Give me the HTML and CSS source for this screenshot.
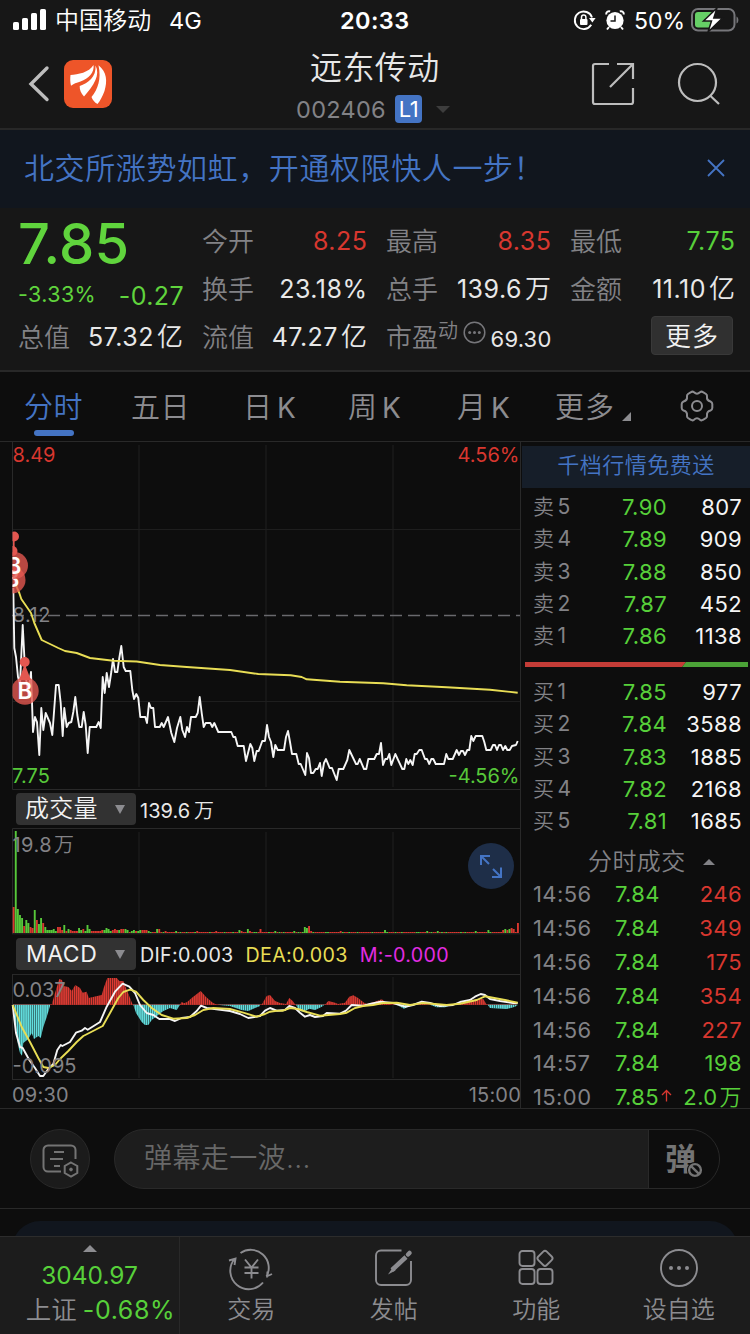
FILE: index.html
```html
<!DOCTYPE html>
<html lang="zh-CN">
<head>
<meta charset="utf-8">
<title>远东传动 002406</title>
<link rel="stylesheet" href="styles.css">
</head>
<body>
<header class="header">
  <div class="status">
    <svg class="signal" width="34" height="22" viewBox="0 0 34 22" fill="#fff"><rect x="0" y="13" width="6" height="8" rx="1.6"/><rect x="9" y="9" width="6" height="12" rx="1.6"/><rect x="18" y="4" width="6" height="17" rx="1.6"/><rect x="27" y="0" width="6" height="21" rx="1.6"/></svg>
    <span class="carrier">中国移动</span>
    <span class="network">4G</span>
    <span class="clock">20:33</span>
    <svg class="lock" width="22" height="20" viewBox="0 0 22 20" fill="none" stroke="#fff" stroke-width="1.9"><path d="M17.2 14.8A8.8 8.8 0 1 1 18 7.5"/><path d="M15 8h6.6L18.4 12.500z" fill="#fff" stroke="none"/><rect x="6" y="9" width="7.500" height="6" rx="1" fill="#fff" stroke="none"/><path d="M7.500 9V7.200a2.200 2.200 0 0 1 4.400 0V9" stroke-width="1.500"/></svg>
    <svg class="alarm" width="20" height="20" viewBox="0 0 20 20"><circle cx="10" cy="10.500" r="8.600" fill="#fff"/><path d="M1.200 4.500C1 2 3 .8 5.200 1.400M18.800 4.500C19 2 17 .8 14.800 1.400" fill="none" stroke="#fff" stroke-width="2"/><path d="M4 17l-2 2.500M16 17l2 2.500" stroke="#fff" stroke-width="2"/><path d="M10 5.500V11H5.500" fill="none" stroke="#171717" stroke-width="1.500"/></svg>
    <span class="percent">50%</span>
    <svg class="battery" width="48" height="24" viewBox="0 0 48 24"><rect x="1" y="1" width="42.500" height="21.500" rx="6" fill="none" stroke="#76767a" stroke-width="2"/><path d="M45.500 8.500c2.500 1 2.500 6 0 7z" fill="#76767a"/><rect x="4" y="4" width="18" height="15.500" rx="3" fill="#66cf66"/><path d="M26 0L12.500 13h8L17 24 31.500 10h-8.700z" fill="#fff" stroke="#171717" stroke-width="1.500"/></svg>
  </div>
  <div class="nav">
    <svg class="back" width="22" height="38" viewBox="0 0 22 38" fill="none" stroke="#bdbdbd" stroke-width="3.400" stroke-linecap="round"><path d="M19 3L3 19l16 15.500" /></svg>
    <svg class="logo" width="48" height="48" viewBox="0 0 48 48"><rect width="48" height="48" rx="9" fill="#ee5529"/><g fill="#fff"><path d="M6.500 15C14 14.500 25 12.500 29.500 5c1.200 7-5 14-13 16.500-4 1.200-7 2.300-9.500 4.300-.8-3.600-1-7-.5-10.800z"/><path d="M31.500 5.500C36.500 15 30 25 20 36.500c-3-3-4.500-7-4.300-10.500C24 23 32.500 17 31.500 5.500z"/><path d="M34.500 5.200C43 12 43.500 21 40.500 31c-2 5-4 9.500-7 13-3-1.500-4.800-4-6-7C34 29 37.500 19 34.500 5.200z"/></g></svg>
    <div class="heading">
      <div class="name">远东传动</div>
      <div class="code">002406<span class="level">L1</span><i class="caret"></i></div>
    </div>
    <svg class="share" width="44" height="44" viewBox="0 0 44 44" fill="none" stroke="#bdbdbd" stroke-width="2.200"><path d="M18 2H4a2 2 0 0 0-2 2v36a2 2 0 0 0 2 2h36a2 2 0 0 0 2-2V26M26 2h16v15M42 2L19 25"/></svg>
    <svg class="search" width="44" height="44" viewBox="0 0 44 44" fill="none" stroke="#bdbdbd" stroke-width="2.200"><circle cx="20.500" cy="20.500" r="18.500"/><path d="M33 33.500l9 8.500"/></svg>
  </div>
</header>

<section class="notice">
  <span>北交所涨势如虹，开通权限快人一步！</span>
  <svg width="18" height="18" viewBox="0 0 18 18" stroke="#4474c4" stroke-width="1.800"><path d="M1 1l16 16M17 1L1 17"/></svg>
</section>

<section class="quote">
  <div class="price-box">
    <div class="price">7.85</div>
    <div class="change"><span>-3.33%</span><b>-0.27</b></div>
  </div>
  <div class="stat"><label>今开</label><span class="up">8.25</span></div>
  <div class="stat"><label>最高</label><span class="up">8.35</span></div>
  <div class="stat"><label>最低</label><span class="down">7.75</span></div>
  <div class="stat"><label>换手</label><span>23.18%</span></div>
  <div class="stat"><label>总手</label><span>139.6<i>万</i></span></div>
  <div class="stat"><label>金额</label><span>11.10<i>亿</i></span></div>
  <div class="stat"><label>总值</label><span>57.32<i>亿</i></span></div>
  <div class="stat"><label>流值</label><span>47.27<i>亿</i></span></div>
  <div class="stat pe"><label>市盈<sup>动</sup></label><svg width="23" height="23" viewBox="0 0 23 23"><circle cx="11.500" cy="11.500" r="10.300" fill="none" stroke="#76767a" stroke-width="1.500"/><g fill="#76767a"><circle cx="6.700" cy="11.500" r="1.500"/><circle cx="11.500" cy="11.500" r="1.500"/><circle cx="16.300" cy="11.500" r="1.500"/></g></svg><span>69.30</span></div>
  <div class="stat more"><button>更多</button></div>
</section>

<nav class="tabs">
  <span class="tab active">分时</span>
  <span class="tab t2">五日</span>
  <span class="tab t3">日<em>K</em></span>
  <span class="tab t4">周<em>K</em></span>
  <span class="tab t5">月<em>K</em></span>
  <span class="tab t6">更多<i></i></span>
  <svg class="gear" width="34" height="32" viewBox="0 0 34 32" fill="none" stroke="#8c8c90" stroke-width="2"><circle cx="17" cy="16" r="5"/><path d="M11 2.200Q12.500 1 14 2.300Q17 5.200 20 2.300Q21.500 1 23 2.200L26 4Q27.300 5 27 6.500Q26.500 10.500 30.500 11.500Q32.300 12.300 32.300 14V18Q32.300 19.700 30.500 20.500Q26.500 21.500 27 25.500Q27.300 27 26 28L23 29.800Q21.500 31 20 29.700Q17 26.800 14 29.700Q12.500 31 11 29.800L8 28Q6.700 27 7 25.500Q7.500 21.500 3.500 20.500Q1.700 19.700 1.700 18V14Q1.700 12.300 3.500 11.500Q7.500 10.500 7 6.500Q6.700 5 8 4Z"/></svg>
</nav>

<main class="market">
  <div class="charts">
    <svg class="panel" width="521" height="349" viewBox="0 441 521 349">
      <defs><clipPath id="plot"><rect x="12.500" y="441" width="508" height="349"/></clipPath></defs>
      <path class="grid" d="M139 445V787M266 445V787M393 445V787"/>
      <path class="grid thin" d="M13 529.500H520M13 701.500H520"/>
      <path class="frame" d="M12.500 441V789.500H520.500V441"/>
      <path d="M12 615.500H520" stroke="#69696d" stroke-width="1.300" stroke-dasharray="12 6"/>
      <text class="t gray" x="12.500" y="622" textLength="38">8.12</text>
      <g clip-path="url(#plot)">
        <polyline class="line white" points="13.300,588 14.300,648 16,657 18,677 20,684 22.700,625 25,670 28,694 31,672 33,732 35,717 37,722 39.300,755 41.300,708 43.300,730 45.700,713 50,723 52.300,735 56,685 58.700,685 60.700,703 62.700,736 64.300,708 66.700,727 68.700,723 71.300,722 73.300,712 75.300,697 77.300,715 79.300,727 81.700,727 83.700,712 85.700,725 87.700,753 89.700,727 96.300,727 98.700,722 100.700,728 102.700,677 104.700,693 106.700,673 109,687 111.300,672 113,659 115,672 117.300,672 119.300,658 121.300,646 123.700,667 125.700,671 130.300,671 132.300,690 134,699 136.300,694 138.300,698 140.300,717 145.300,717 147,723 149,703 151,708 153.300,708 155,727 159.700,727 161.700,723 163.700,727 168,717 171.300,733 174.300,742 177,728 180.300,717 182.300,730 185,737 187,727 189,732 191,717 195.700,717 197.700,713 199.700,697 201.700,713 203.700,727 205.700,723 210.300,723 212.300,727 214.300,723 218.300,732 231.300,732 233.300,737 235.300,737 237.700,746 243.700,746 246,761 250.300,744 252.300,748 254.300,761 256.700,751 258.700,751 262.300,741 265,741 267,725 269,737 271,742 273.300,757 275.300,745 277.700,750 284,750 286,737 288,731 290,742 292,754 296.300,754 298.700,764 300.700,764 305.300,775 307,753 309,758 311,773 313.300,773 315.700,769 317.700,769 320,763 321.700,776 324,763 326,759 329.700,768 332,768 336.700,780 338.700,769 343.300,769 347.300,760 349.300,750 356,764 357.700,764 359.700,759 364,769 366.300,769 368.300,759 374.300,759 376.700,754 379,754 381,743 383,765 385.300,759 387.300,759 389.300,754 391.300,765 395.300,754 402.300,769 404.300,769 406.300,759 408.300,764 410.300,760 412.700,765 414.700,754 416.700,754 419.300,750 421.700,750 425,759 427,759 429.300,764 431.300,759 433.300,759 435.700,764 444,764 446.300,754 448.300,759 452.700,759 456.700,750 459,755 461,751 463,751 465,755 467.300,750 469.300,750 471.300,736 473.300,741 475.700,736 482.300,736 484.300,742 486.300,750 490.700,750 493,745 495,745 497,750 499,745 501,745 503,750 505.300,746 507.300,750 509.700,750 512,746 516,745 517.700,741"/>
        <polyline class="line yellow" points="13,575 16.700,587 19.300,593 21.300,599 31,613 34.300,623 41.700,640 50,644 58.300,648 65,651 76.700,653 90,658 113.300,660.700 136.700,661.500 160,665 186.700,667 230,670 258.300,674 290.700,675.300 301.700,677 306.700,679.300 340,681.700 383.300,683.300 406.700,685.300 446.700,687.300 490,689.700 517.700,692.700"/>
        <g fill="#e35750">
          <circle cx="12" cy="580" r="13.500" fill-opacity=".8"/><text class="b" x="4.500" y="587">B</text>
          <circle cx="14.500" cy="565.500" r="13.500" fill-opacity=".8"/><text class="b" x="6.500" y="573.500">B</text>
          <circle cx="14" cy="536.500" r="5"/><circle cx="12.500" cy="551" r="5"/><rect x="13" y="538" width="1.600" height="12"/>
          <path d="M24.700 664L31 680H19z"/><circle cx="24.700" cy="662" r="5"/>
          <circle cx="25" cy="691" r="13.700" fill-opacity=".8"/><text class="b" x="17.500" y="698.500">B</text>
        </g>
      </g>
      <text class="t" fill="#d8372f" x="12.500" y="461.500" textLength="43">8.49</text>
      <text class="t" fill="#d8372f" x="457.500" y="461.500" textLength="62">4.56%</text>
      <text class="t" fill="#57c83a" x="12" y="782.500" textLength="38">7.75</text>
      <text class="t" fill="#57c83a" x="448.500" y="782.500" textLength="71">-4.56%</text>
    </svg>

    <div class="indicator"><span class="picker">成交量<i></i></span><span class="v1">139.6<i>万</i></span></div>
    <svg class="panel" width="521" height="106" viewBox="0 828 521 106">
      <path class="grid" d="M139 832V934M266 832V934M393 832V934"/>
      <path class="frame" d="M12.500 934V828.500H520.500V934M12 933.800H521"/>
      <path id="vol-up" fill="#d8372f"/>
      <path id="vol-down" fill="#57c83a"/>
      <text class="t gray" x="12.500" y="851.500" textLength="39">19.8</text><text class="t gray cjk" x="54" y="851.500">万</text>
      <circle cx="491" cy="866" r="23" fill="#1e2e48"/>
      <path d="M481 865V856H490M481.500 856.500L489 864M501 867.500V877H492M501 877L493 869" fill="none" stroke="#4474c4" stroke-width="2"/>
    </svg>

    <div class="indicator macd"><span class="picker">MACD<i></i></span><span class="v2">DIF:0.003</span><span class="v3">DEA:0.003</span><span class="v4">M:-0.000</span></div>
    <svg class="panel" width="521" height="106" viewBox="0 974 521 106">
      <defs>
        <pattern id="stripes" width="2.110" height="120" x="12.700" y="974" patternUnits="userSpaceOnUse"><rect x="1.400" width=".7" height="120" fill="#0d0d0d" fill-opacity=".55"/></pattern>
        <path id="hist-up" d="M51.700 1004.700L55 993 59.300 979 62 980 63.300 986 68.300 987 71.700 991 75.300 985 80 988 82.700 992.700 86.700 991.700 88.700 998 101.700 995 104 987 107.300 978H116.700L119.300 981H123.300L126 988 130 998 132.700 1004.700zM180 1004.700L181.700 1002 184 1003.300 187.300 1002 191.700 998 200.700 991 206 997 213 1003 217 1004.700zM261.700 1004.700L266.700 996 270 995 275 1001 280 1003 286 1004 289.300 998 292.700 1001 295.300 1004.700zM325 1004.700L328.300 1001 335 1002.700 338 1004 345 1002.700 349.300 996.700 353.300 995.300 357.700 997.700 364 1002.700 367 1004 375 1001.700 381.700 999.300 386.700 1003 392 1004.700zM418 1004.700L423 1002 427 1004.700zM456.700 1004.700L466.700 1001.700 478.300 999H483.300L486.700 1004.700z"/>
        <path id="hist-down" d="M12.700 1004.700L14 1020 16 1030 18 1045 20 1053 22 1055.700 23.300 1043 28.300 1039 31.700 1033 34 1039 38.300 1036 40.700 1038 43.300 1027 46.700 1017 50 1006V1004.700zM133.300 1004.700L136 1013 141.700 1022 145 1025H148.300L151.700 1020 156.700 1016 163.300 1011 170 1008 176.700 1010 180 1004.700zM217.300 1004.700L230 1006 241.700 1010 248.300 1011 255 1008 260 1006V1004.700zM296 1004.700L299.300 1010.700 304 1011.700 309.300 1008.700 315 1010 321.700 1006.700 324.500 1004.700zM396.700 1004.700L404 1008.700 408.300 1006.700 415 1004.700zM430 1004.700L436.700 1007.300H445L451.700 1004.700zM487.700 1004.700L490 1008 506.700 1009 515 1006.700 518 1004.700z"/>
      </defs>
      <path class="grid" d="M139 977V1078M266 977V1078M393 977V1078"/>
      <path class="frame" d="M12.500 1080V974.500M520.500 974V1080M12 974.500H521M12 1079.500H521"/>
      <path d="M13 1004.500H517" stroke="#7c2622" stroke-width="1"/>
      <use href="#hist-up" fill="#dd3a32"/><use href="#hist-up" fill="url(#stripes)"/>
      <use href="#hist-down" fill="#62dede"/><use href="#hist-down" fill="url(#stripes)"/>
      <polyline class="line white" points="12.700,1005 16,1033 20,1047 22.700,1048 29.300,1060 35,1068 40,1076 43.300,1076 48.300,1069 53.300,1064 57.300,1050 60.700,1045 62.300,1046 70,1042 76,1032.700 81.700,1030.700 85,1028 87.700,1029.700 100,1022 106.700,1006.700 115,991.700 122.700,983.700 129.300,986.700 135,993 140,1005 146.700,1013 153.300,1015 159.300,1019 170,1019 175,1021 181.700,1018 190,1017 196.700,1011 201,1005.700 206.700,1008 230,1011 240,1014 248.300,1018 260,1016 265,1010.700 270,1008 276.700,1010.700 285,1010 289.300,1006 295,1008 300,1012.700 305,1016.700 310,1015 315,1017 323,1016 326.700,1013 340,1013.700 346,1010.700 351.700,1005 363.300,1005.700 370,1004 380.700,1001.700 393,1003 405,1006.700 413,1005 421.700,1001.700 430,1003 440,1006 453,1005 460,1002 470,1000 475,996.700 480.700,994 485,995 490,999 500,1001 513,1003 517.700,1003"/>
      <polyline class="line yellow" points="12.700,1005 16,1013 21.700,1027 30,1042 38.300,1058 43.300,1067 48.300,1068 55,1065 60,1059 68.300,1051 76.700,1042 83.300,1036 95,1030 102.700,1026 110,1013 118.300,998 123.300,992 130,989.700 136,991.700 143.300,1000 151.700,1008 161.700,1015 173.300,1018.700 186.700,1018 195,1015 203.300,1010 213.300,1008 230,1009 243.300,1012.700 256.700,1016.700 265,1014 270,1011.700 276.700,1010.700 283,1010.700 290,1008 298,1009 306.700,1012 320,1015.700 340,1014 346.700,1012.700 355,1008 363,1006 373,1005 383,1003 396.700,1002.700 410,1005 423,1003 446.700,1005 460,1003.700 476.700,1000 485,996.300 493,997.700 505,1000 517.700,1002.700"/>
      <text class="t gray" x="12.500" y="996.500" textLength="53">0.037</text>
      <text class="t gray" x="12.500" y="1072.500" textLength="64">-0.095</text>
    </svg>
    <div class="times"><span>09:30</span><span>15:00</span></div>
  </div>

  <aside class="book">
    <div class="promo">千档行情免费送</div>
    <div class="orders">
      <div class="order"><label>卖<i>5</i></label><b>7.90</b><span>807</span></div>
      <div class="order"><label>卖<i>4</i></label><b>7.89</b><span>909</span></div>
      <div class="order"><label>卖<i>3</i></label><b>7.88</b><span>850</span></div>
      <div class="order"><label>卖<i>2</i></label><b>7.87</b><span>452</span></div>
      <div class="order"><label>卖<i>1</i></label><b>7.86</b><span>1138</span></div>
    </div>
    <svg class="ratio" width="223" height="5" viewBox="0 0 223 5"><path d="M0 0H161L157 5H0z" fill="#c43c37"/><path d="M161 0H223V5H157z" fill="#4ba237"/></svg>
    <div class="orders">
      <div class="order"><label>买<i>1</i></label><b>7.85</b><span>977</span></div>
      <div class="order"><label>买<i>2</i></label><b>7.84</b><span>3588</span></div>
      <div class="order"><label>买<i>3</i></label><b>7.83</b><span>1885</span></div>
      <div class="order"><label>买<i>4</i></label><b>7.82</b><span>2168</span></div>
      <div class="order"><label>买<i>5</i></label><b>7.81</b><span>1685</span></div>
    </div>
    <div class="deals-title">分时成交<i></i></div>
    <div class="deals">
      <div class="deal"><time>14:56</time><b>7.84</b><span class="up">246</span></div>
      <div class="deal"><time>14:56</time><b>7.84</b><span class="up">349</span></div>
      <div class="deal"><time>14:56</time><b>7.84</b><span class="up">175</span></div>
      <div class="deal"><time>14:56</time><b>7.84</b><span class="up">354</span></div>
      <div class="deal"><time>14:56</time><b>7.84</b><span class="up">227</span></div>
      <div class="deal"><time>14:57</time><b>7.84</b><span class="down">198</span></div>
      <div class="deal"><time>15:00</time><b>7.85</b><svg width="11" height="13" viewBox="0 0 11 13" fill="none" stroke="#d8372f" stroke-width="1.300"><path d="M5.500 12.500V1.500M1 6L5.500 1.500 10 6"/></svg><span class="down">2.0<i>万</i></span></div>
    </div>
  </aside>
</main>

<section class="barrage">
  <div class="round"><svg width="37" height="34" viewBox="0 0 37 34" fill="none" stroke="#747474" stroke-width="2"><path d="M19 27.500H6a4.500 4.500 0 0 1-4.500-4.500V6A4.500 4.500 0 0 1 6 1.500H29A4.500 4.500 0 0 1 33.500 6V15M12 8H22M8 15H21M12 22H18"/><path d="M29 18.500l6.300 3.500v7L29 32.500 22.700 29V22z"/><circle cx="29" cy="25.500" r="1.400" fill="#747474" stroke-width="1"/></svg></div>
  <div class="field">
    <span class="placeholder">弹幕走一波...</span>
    <span class="toggle">弹<svg width="18" height="18" viewBox="0 0 18 18" fill="none" stroke="#747474" stroke-width="2.400"><circle cx="9" cy="9" r="8" fill="#0d0d0d" stroke="none"/><circle cx="9" cy="9" r="5.900"/><path d="M4.800 4.800l8.400 8.400"/></svg></span>
  </div>
</section>
<div class="sheet"><div></div></div>

<footer class="toolbar">
  <div class="index"><i></i><span class="value">3040.97</span><span class="delta">上证<b>-0.68%</b></span></div>
  <div class="tool"><svg width="44" height="40" viewBox="0 0 44 40" fill="none" stroke="#8c8c90" stroke-width="1.900"><path d="M11.500 5A18 18 0 0 1 37.500 28.500M38 29.500L38.500 23.500M37.500 28.500L43 26M34 34.500A18 18 0 0 1 5.500 11M0 12.500L6.500 10.500 5.500 17M16 11.500L22.500 19.500 29 11.500M22.500 19.500V30.500M15.500 19.500H29.500M15.500 25H29.500"/></svg>交易</div>
  <div class="tool"><svg width="38" height="40" viewBox="0 0 38 40" fill="none" stroke="#8c8c90" stroke-width="1.900"><path d="M26.500 2.500H6a5 5 0 0 0-5 5V32a5 5 0 0 0 5 5H31a5 5 0 0 0 5-5V13"/><path d="M31 9L17 22" stroke-width="4.500"/><path d="M18 19L13 26.500 20.500 22.500z" fill="#8c8c90" stroke="none"/><path d="M33 6.500L34.500 5" stroke-width="4.500" stroke-linecap="round"/></svg>发帖</div>
  <div class="tool"><svg width="38" height="40" viewBox="0 0 38 40" fill="none" stroke="#8c8c90" stroke-width="1.900"><rect x="2.500" y="3" width="15" height="15" rx="3"/><rect x="2.500" y="21" width="15" height="15" rx="3"/><rect x="20.500" y="21" width="15" height="15" rx="3"/><rect x="22" y="4.300" width="12" height="12" rx="2.500" transform="rotate(45 28 10.300)"/></svg>功能</div>
  <div class="tool"><svg width="38" height="40" viewBox="0 0 38 40" fill="none" stroke="#8c8c90" stroke-width="1.900"><circle cx="19" cy="20" r="18"/><g fill="#8c8c90" stroke="none"><circle cx="11" cy="20" r="2"/><circle cx="19" cy="20" r="2"/><circle cx="27" cy="20" r="2"/></g></svg>设自选</div>
</footer>
<script src="volume.js"></script>
</body>
</html>
```
FILE: styles.css
```css
* { box-sizing: border-box; margin: 0; padding: 0; }
body {
  width: 750px; height: 1334px; overflow: hidden;
  background: #0d0d0d; color: #e8e8e8;
  font-family: Inter, "Noto Sans CJK SC", sans-serif; font-weight: 400;
  display: flex; flex-direction: column; white-space: nowrap;
}
i, em { font-style: normal; }
b { font-weight: 400; }
svg { display: block; flex: none; overflow: visible; }
.up { color: #d8372f !important; }
.down { color: #57d03a !important; }

.header { height: 130px; background: #171717; border-bottom: 2px solid #282828; flex: none; }
.status { height: 40px; display: flex; align-items: center; padding: 0 12px 0 13px; color: #fff; line-height: 40px; }
.carrier { font-size: 24px; margin-left: 8px; width: 115px; letter-spacing: .1px; font-weight: 350; padding-top: 1px; }
.network { font-size: 23.5px; width: 170px; margin-left: -1px; padding-top: 1px; }
.clock { font-size: 23.5px; font-weight: 600; letter-spacing: .4px; width: 234px; padding-top: 1px; margin-left: 1px; }
.alarm { margin-left: 9px; }
.percent { font-size: 23px; margin-left: 9px; width: 57px; padding-top: 1px; }
.battery { flex: none; margin-right: -10px; }
.nav { height: 88px; display: flex; padding-left: 28px; }
.back { margin-top: 25px; }
.logo { margin: 20px 0 0 14px; }
.heading { width: 250px; margin-left: 137px; padding-left: 47px; }
.heading .name { font-size: 32px; letter-spacing: .4px; line-height: 40px; height: 49px; margin-left: 14px; padding-top: 8px; font-weight: 350; }
.heading .code { display: flex; align-items: center; height: 40px; color: #828286; font-size: 23.500px; letter-spacing: .3px; }
.level { width: 27px; height: 28px; margin-left: 9px; line-height: 28px; border-radius: 4px; background: #4474c4; color: #fff; font-size: 22px; text-align: center; letter-spacing: -.5px; }
.caret { margin-left: 14px; border: 7px solid transparent; border-top-color: #3d3d3d; border-bottom: 0; }
.share { margin: 22px 0 0 92px; }
.search { margin: 22px 0 0 42px; }

.notice { height: 78px; background: #11161e; display: flex; align-items: center; justify-content: space-between; padding: 0 25px 2px 24px; color: #4474c4; font-size: 30px; letter-spacing: .6px; flex: none; font-weight: 350; }
.notice span { margin-top: -4px; }

.quote { height: 164px; flex: none; background: #171717; border-bottom: 2px solid #282828; padding: 9px 15px 0 18px; display: grid; grid-template-columns: repeat(4, 165px); grid-template-rows: repeat(3, 48px); column-gap: 19px; }
.price-box { grid-row: span 2; color: #60d43d; }
.price { font-size: 56px; font-weight: 500; line-height: 55px; letter-spacing: .2px; height: 54px; }
.change { display: flex; justify-content: space-between; align-items: center; font-size: 21.5px; line-height: 40px; letter-spacing: .4px; }
.change b { font-size: 25px; padding-top: 5px; margin-right: -1px; }
.stat { display: flex; justify-content: space-between; align-items: center; line-height: 48px; font-size: 25px; }
.stat span { letter-spacing: .5px; margin-right: -.5px; }
.stat label { color: #828286; font-size: 26px; font-weight: 350; padding-top: 1px; }
.stat i { margin-left: 3px; font-weight: 350; font-size: 26px; }
.pe label { display: flex; }
.pe sup { font-size: 20px; line-height: 34px; }
.pe svg { margin: -9px 0 0 -6px; }
.pe span { font-size: 22px; padding-top: 4px; margin-left: -7px; letter-spacing: .2px; }
.stat.more { justify-content: flex-end; padding: 0 2px 4px 0; }
.stat button { width: 82px; height: 39px; border: 1px solid #393939; border-radius: 4px; background: #303030; color: #f2f2f2; font: 350 26px/35px "Noto Sans CJK SC", sans-serif; letter-spacing: 1px; padding-bottom: 2px; }

.tabs { height: 70px; flex: none; border-bottom: 1px solid #292929; display: flex; color: #8c8c90; font-size: 29px; line-height: 71px; font-weight: 350; padding-left: 24px; }
.tab em { margin-left: 5px; font-weight: 400; font-size: 28px; }
.tab { flex: none; }
.tab.active { width: 107px; color: #4474c4; display: flex; flex-direction: column; letter-spacing: .5px; }
.tab.active::after { content: ""; width: 40px; height: 6px; border-radius: 3px; background: #4474c4; margin: -13px 0 0 10px; }
.t2 { width: 112px; letter-spacing: .5px; }
.t3 { width: 105px; }
.t4 { width: 109px; }
.t5 { width: 98px; }
.t6 { width: 125px; display: flex; letter-spacing: 1px; }
.t6 i { align-self: flex-start; margin: 40px 0 0 7px; border-left: 9px solid transparent; border-bottom: 9px solid #8c8c90; }
.gear { margin-top: 18px; }

.market { display: flex; height: 668px; flex: none; border-bottom: 1px solid #292929; margin-top: -1px; }
.charts { width: 521px; flex: none; }
.grid { fill: none; stroke: #1a1a1a; stroke-width: 1.6; }
.grid.thin { stroke-width: 1; stroke: #1e1e1e; }
.frame { fill: none; stroke: #292929; stroke-width: 1; }
.line { fill: none; stroke-width: 1.9; stroke-linejoin: round; }
.white { stroke: #f5f5f5; }
.yellow { stroke: #e8dd55; }
.t { font-size: 20px; }
.gray { fill: #828286; }
.cjk { font-weight: 350; }
.b { font-size: 22.5px; font-weight: 600; fill: #fff; }
.indicator { height: 38px; display: flex; align-items: center; padding-left: 16px; font-size: 20px; }
.indicator.macd { height: 40px; }
.picker { width: 120px; height: 32px; border-radius: 4px; background: #323232; color: #f2f2f2; display: flex; align-items: center; justify-content: space-between; padding: 0 11px 0 9px; font-size: 24px; line-height: 32px; font-weight: 350; letter-spacing: .2px; }
.macd .picker { font-weight: 400; font-size: 23px; padding-left: 10px; letter-spacing: .5px; }
.picker i { border: 5px solid transparent; border-top: 9px solid #8c8c90; border-bottom: 0; }
.v1, .v2 { margin-left: 4px; }
.v1 i { margin-left: 4px; font-weight: 350; }
.v2, .v3, .v4 { letter-spacing: .3px; font-size: 19.7px; padding-top: 2px; }
.v3 { margin-left: 12px; color: #e8dd55; }
.v4 { margin-left: 12px; color: #e22ce2; }
.times { display: flex; justify-content: space-between; padding-left: 12px; color: #828286; font-size: 20px; letter-spacing: .2px; line-height: 31px; height: 28px; }

.book { width: 230px; flex: none; margin-left: -1px; border-left: 1px solid #292929; padding: 5px 0 0 1px; }
.promo { height: 42px; background: #161e29; color: #4474c4; font-size: 22px; letter-spacing: .5px; line-height: 39px; text-align: center; font-weight: 350; }
.orders { padding-top: 3px; height: 165px; font-size: 22px; letter-spacing: .4px; }
.order, .deal { display: flex; padding: 0 8px 0 11px; line-height: 32.3px; height: 32.3px; }
.order label { width: 47px; color: #828286; font-weight: 350; font-size: 21px; }
.order label i { margin-left: 3px; font-weight: 400; }
.order b { width: 87px; text-align: right; color: #57d03a; }
.order span, .deal span { flex: 1; text-align: right; color: #f5f5f5; }
.ratio { margin: 9px 0 6px 3px; }
.deals-title { height: 38px; display: flex; align-items: center; padding: 9px 0 0 66px; color: #828286; font-size: 24px; letter-spacing: .4px; font-weight: 350; line-height: 30px; }
.deals-title i { margin-left: 17px; border: 6px solid transparent; border-bottom: 6px solid #828286; border-top: 0; }
.deals { margin-top: 1px; }
.deal { height: 33.9px; line-height: 34.5px; font-size: 22px; letter-spacing: .4px; }
.deal time { color: #828286; width: 82px; }
.deal b { color: #57d03a; width: 46px; }
.deal svg { margin-top: 9px; }
.deal span i { margin-left: 2px; font-weight: 350; }

.barrage { height: 100px; flex: none; border-bottom: 1px solid #292929; display: flex; padding: 20px 30px 0; gap: 24px; }
.round { width: 60px; height: 60px; border-radius: 50%; background: #1b1b1b; border: 1px solid #292929; display: flex; align-items: center; justify-content: center; padding-top: 3px; }
.field { flex: 1; height: 60px; border: 1px solid #292929; border-radius: 30px; overflow: hidden; display: flex; background: #1d1d1d; }
.placeholder { flex: 1; padding-left: 29px; font-size: 28px; letter-spacing: .4px; line-height: 56px; color: #686868; font-weight: 350; }
.toggle { width: 71px; border-left: 1px solid #292929; background: #0d0d0d; color: #747474; font-size: 31px; font-weight: 700; line-height: 58px; padding-left: 16px; position: relative; }
.toggle svg { position: absolute; left: 37px; top: 31px; }
.sheet { flex: none; height: 27px; padding: 12px 12px 0; overflow: hidden; }
.sheet div { height: 60px; border-radius: 28px; background: #11161e; }

.toolbar { flex: 1; display: flex; background: #1c1c1c; border-top: 1px solid #2c2c2c; }
.index { width: 180px; border-right: 1px solid #292929; display: flex; flex-direction: column; align-items: center; color: #57d03a; font-size: 24.5px; padding-top: 8px; }
.index i { border: 7px solid transparent; border-bottom: 7px solid #8c8c90; border-top: 0; }
.index .value { line-height: 35px; margin-top: 6px; }
.index .delta { line-height: 34px; padding-left: 22px; }
.delta { color: #8c8c90; font-weight: 350; font-size: 25.5px; }
.delta b { margin-left: 6px; color: #57d03a; font-weight: 400; font-size: 25px; letter-spacing: .6px; }
.tool { flex: 1; display: flex; flex-direction: column; align-items: center; color: #8c8c90; font-size: 24px; line-height: 36px; padding-top: 11px; font-weight: 350; }
.tool svg { margin-bottom: 4px; }
```
FILE: volume.js
```javascript
// Minute volume bars: "<index><u|d><height>"; minutes not listed are one pixel high.
const bars = "0u26 1d102 2d24 3d18 4d15 5u7 6d13 7d10 8u6 9u5 10d23 11u13 12d9 13d15 14u10 15d6 16d3 17d3 18d3 19d4 20d2 21u6 22u6 23u3 24d8 25u2 26d4 27u3 28u2 29u2 30u2 31d5 32d3 33u4 34d2 35d8 36d4 37u2 38u2 39u2 40u2 41u2 42u3 43d3 44d5 45d4 46d2 47u3 48u4 49u3 50d3 51u4 52u4 53d4 54d3 56d2 57d3 58u2 59d2 60d3 61u3 62u3 63u3 64d2 68d4 69u4 72u2 77d2 87u2 96u2 107d3 108u2 111d4 112u2 117u4 124d2 133d2 138d6 139d5 140u7 141u2 155u2 176d3 196d2 201d2 219d2 225d3 232u3 233d4 234u3 235d4 236u5 237u4 239u10";
const listed = new Map(bars.split(" ").map(b => {
  const [, i, side, h] = b.match(/(\d+)([ud])(\d+)/);
  return [+i, { side, h: +h }];
}));
const paths = { u: "", d: "" };
for (let i = 0; i < 240; i++) {
  const bar = listed.get(i) || { side: i % 7 === 2 || i % 11 === 5 ? "d" : "u", h: 1 };
  const x = 12.7 + i * 2.11;
  paths[bar.side] += `M${x.toFixed(2)} 933v${-bar.h}h1.9v${bar.h}z`;
}
document.getElementById("vol-up").setAttribute("d", paths.u);
document.getElementById("vol-down").setAttribute("d", paths.d);
```
